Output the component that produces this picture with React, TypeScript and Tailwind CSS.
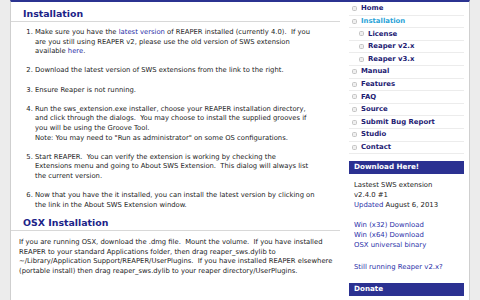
import React from 'react';

const NAV = [
  { label: 'Home', sub: false },
  { label: 'Installation', sub: false, active: true },
  { label: 'License', sub: true },
  { label: 'Reaper v2.x', sub: true },
  { label: 'Reaper v3.x', sub: true },
  { label: 'Manual', sub: false },
  { label: 'Features', sub: false },
  { label: 'FAQ', sub: false },
  { label: 'Source', sub: false },
  { label: 'Submit Bug Report', sub: false },
  { label: 'Studio', sub: false },
  { label: 'Contact', sub: false },
];

const S = '\u00a0 ';

const Link: React.FC<{ children: React.ReactNode }> = ({ children }) => (
  <a href="#" className="text-[#2a2fa8]">{children}</a>
);

const SectionTitle: React.FC<{ children: React.ReactNode }> = ({ children }) => (
  <h2 className="border-b border-[#d8d8d8] pl-[12px] text-[9.4px] leading-[12px] font-bold text-[#1c2388] pb-[1px]">
    {children}
  </h2>
);

export default function App() {
  return (
    <div
      className="h-[300px] w-[480px] overflow-hidden bg-[#ececec] px-[10px]"
      style={{ fontFamily: '"DejaVu Sans", Verdana, sans-serif' }}
    >
      <div className="flex h-full border-x border-[#cfcfcf] border-t-2 border-t-[#2b3391] bg-white">
        {/* main column */}
        <div className="w-[329px] shrink-0 pt-[6px] text-[6.8px] leading-[9.6px] text-[#222] whitespace-nowrap">
          <SectionTitle>Installation</SectionTitle>
          <ol className="mt-[6px] list-decimal pl-[24px] space-y-[9.6px]">
            <li>
              Make sure you have the <Link>latest version</Link> of REAPER installed (currently 4.0).{S}If you
              <br />
              are you still using REAPER v2, please use the old version of SWS extension
              <br />
              available <Link>here</Link>.
            </li>
            <li>Download the latest version of SWS extensions from the link to the right.</li>
            <li>Ensure Reaper is not running.</li>
            <li>
              Run the sws_extension.exe installer, choose your REAPER installation directory,
              <br />
              and click through the dialogs.{S}You may choose to install the supplied grooves if
              <br />
              you will be using the Groove Tool.
              <br />
              Note: You may need to "Run as administrator" on some OS configurations.
            </li>
            <li>
              Start REAPER.{S}You can verify the extension is working by checking the
              <br />
              Extensions menu and going to About SWS Extension.{S}This dialog will always list
              <br />
              the current version.
            </li>
            <li>
              Now that you have the it installed, you can install the latest version by clicking on
              <br />
              the link in the About SWS Extension window.
            </li>
          </ol>

          <div className="mt-[7px]">
            <SectionTitle>OSX Installation</SectionTitle>
          </div>
          <p className="mt-[7px] pl-[8px]">
            If you are running OSX, download the .dmg file.{S}Mount the volume.{S}If you have installed
            <br />
            REAPER to your standard Applications folder, then drag reaper_sws.dylib to
            <br />
            ~/Library/Application Support/REAPER/UserPlugins.{S}If you have installed REAPER elsewhere
            <br />
            (portable install) then drag reaper_sws.dylib to your reaper directory/UserPlugins.
          </p>
        </div>

        {/* sidebar */}
        <div className="flex-1 pl-[9px] pr-[5px] pt-[1px]">
          <ul>
            {NAV.map((item) => (
              <li
                key={item.label}
                className={`flex h-[12.6px] items-center gap-[4px] border-b border-[#ececec] ${
                  item.sub ? 'pl-[10px]' : 'pl-[3px]'
                }`}
              >
                <span className="h-[5px] w-[5px] rounded-[1.5px] border border-[#c4c4c4] bg-[#efefef]" />
                <span
                  className={`text-[6.9px] font-bold leading-none ${
                    item.active ? 'text-[#2aa3d8]' : 'text-[#1d2072]'
                  }`}
                >
                  {item.label}
                </span>
              </li>
            ))}
          </ul>

          <div className="mt-[7px] flex h-[13px] items-center bg-[#2b3191] pl-[5px] text-[7.2px] font-bold text-white">
            Download Here!
          </div>
          <div className="mt-[6px] pl-[5px] text-[6.9px] leading-[10px] text-[#222] whitespace-nowrap">
            <div>Lastest SWS extension</div>
            <div>v2.4.0 #1</div>
            <div>
              <span className="text-[#2a2fa8]">Updated</span> August 6, 2013
            </div>
            <div className="mt-[11px] leading-[9.7px]">
              <div><Link>Win (x32) Download</Link></div>
              <div><Link>Win (x64) Download</Link></div>
              <div><Link>OSX universal binary</Link></div>
            </div>
            <div className="mt-[12px]"><Link>Still running Reaper v2.x?</Link></div>
          </div>
          <div className="mt-[11px] flex h-[13px] items-center bg-[#2b3191] pl-[5px] text-[7.2px] font-bold text-white">
            Donate
          </div>
        </div>
      </div>
    </div>
  );
}
